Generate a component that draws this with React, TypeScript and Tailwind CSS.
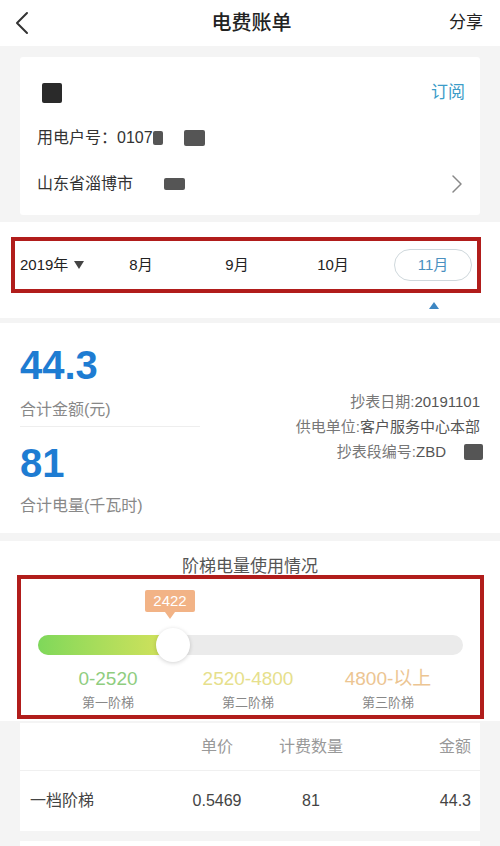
import React from "react";

const font = { fontFamily: '"Liberation Sans", "Noto Sans CJK SC", sans-serif' };

function Blob({ className }: { className: string }) {
  return <span className={"inline-block rounded-[2px] bg-[#555] blur-[0.6px] " + className} />;
}

export default function App() {
  const months = ["8月", "9月", "10月"];

  const tiers = [
    { range: "0-2520", label: "第一阶梯", color: "text-[#8fcd7f]" },
    { range: "2520-4800", label: "第二阶梯", color: "text-[#e6e08c]" },
    { range: "4800-以上", label: "第三阶梯", color: "text-[#ecc592]" },
  ];

  return (
    <div style={font} className="w-[500px] h-[846px] overflow-hidden bg-[#f4f4f4] text-[#333]">
      {/* 顶部导航 */}
      <div className="h-[46px] bg-white flex items-center justify-between px-[14px]">
        <svg width="16" height="24" viewBox="0 0 16 24" className="text-[#333]">
          <path d="M13 2 L3 12 L13 22" fill="none" stroke="currentColor" strokeWidth="2" strokeLinecap="round" strokeLinejoin="round" />
        </svg>
        <h1 className="text-[20px] font-medium text-[#222] ml-[24px]">电费账单</h1>
        <span className="text-[17px] text-[#222] mr-[3px]">分享</span>
      </div>

      {/* 用户信息 */}
      <div className="mt-[11px] mx-5 h-[158px] bg-white rounded-[3px] pl-[17px] pr-[15px] pt-[26px]">
        <div className="flex items-center justify-between h-[20px]">
          <span className="ml-[5px] inline-block w-[20px] h-[20px] bg-[#2a2a2a] rounded-[2px] blur-[0.7px]" />
          <span className="text-[17px] text-[#3c9cc8]">订阅</span>
        </div>
        <div className="mt-[25px] flex items-center h-[20px] text-[16px]">
          <span>用电户号：0107</span>
          <Blob className="w-[10px] h-[14px] ml-[0px]" />
          <Blob className="w-[21px] h-[16px] ml-[21px]" />
        </div>
        <div className="mt-[26px] flex items-center h-[20px] text-[16px]">
          <span>山东省淄博市</span>
          <Blob className="w-[21px] h-[12px] ml-[31px]" />
          <span className="ml-auto mr-[2px]">
            <svg width="12" height="20" viewBox="0 0 12 20">
              <path d="M2 2 L10 10 L2 18" fill="none" stroke="#888" strokeWidth="1.5" strokeLinecap="round" strokeLinejoin="round" />
            </svg>
          </span>
        </div>
      </div>

      {/* 月份选择 */}
      <div className="mt-[7px] h-[96px] bg-white pt-[15px]">
        <div className="mx-[11px] w-[470px] h-[56px] border-4 border-[#b11d1b] flex items-center text-[15px] text-[#222]">
          <div className="flex items-center pl-[5px] w-[78px]">
            <span>2019年</span>
            <svg width="10" height="8" viewBox="0 0 10 8" className="ml-[6px]">
              <path d="M0 0 H10 L5 8 Z" fill="#444" />
            </svg>
          </div>
          {months.map((m, i) => (
            <div key={i} className="w-[96px] text-center">{m}</div>
          ))}
          <div className="ml-[13px] w-[78px] h-[32px] rounded-full border border-[#cfd8dc] flex items-center justify-center text-[#4a90c0]">
            11月
          </div>
        </div>
        <div className="flex justify-end pr-[61px] mt-[9px]">
          <svg width="10" height="7" viewBox="0 0 10 7">
            <path d="M5 0 L10 7 H0 Z" fill="#3d86c2" />
          </svg>
        </div>
      </div>

      {/* 金额、电量 */}
      <div className="mt-[5px] h-[210px] bg-white flex px-5">
        <div className="w-[180px]">
          <div className="pt-[20px] text-[40px] leading-[44px] font-bold text-[#1e7cd2]">44.3</div>
          <div className="mt-[11px] text-[16px] leading-[24px] text-[#888]">合计金额(元)</div>
          <div className="mt-[4px] h-px bg-[#eee]" />
          <div className="pt-[14px] text-[40px] leading-[44px] font-bold text-[#1e7cd2]">81</div>
          <div className="mt-[9px] text-[16px] leading-[24px] text-[#888]">合计电量(千瓦时)</div>
        </div>
        <div className="flex-1 flex flex-col items-end pt-[66px] text-[15px] leading-[25px] text-[#777]">
          <div>抄表日期:<span className="text-[#555]">20191101</span></div>
          <div>供电单位:<span className="text-[#555]">客户服务中心本部</span></div>
          <div className="flex items-center">
            抄表段编号:<span className="text-[#555]">ZBD</span>
            <Blob className="w-[19px] h-[16px] ml-[18px] -mr-[3px]" />
          </div>
        </div>
      </div>

      {/* 阶梯电量 */}
      <div className="mt-[8px] h-[180px] bg-white pt-[14px]">
        <div className="text-center text-[17px] leading-[24px] text-[#555]">阶梯电量使用情况</div>
        <div className="mx-[17px] w-[467px] h-[144px] -mt-[4px] border-4 border-[#b11d1b] relative">
          <div className="absolute left-[124px] top-[11px] flex flex-col items-center">
            <div className="w-[50px] h-[22px] rounded-[2px] bg-[#f2b386] text-white text-[15px] leading-[22px] text-center">2422</div>
            <div className="w-0 h-0 border-x-[5px] border-x-transparent border-t-[7px] border-t-[#f2b386]" />
          </div>
          <div className="absolute left-[17px] top-[56px] w-[425px] h-[20px] rounded-full bg-[#ebebeb]">
            <div className="h-full w-[136px] rounded-l-full bg-gradient-to-r from-[#7ed85a] to-[#d6e25c]" />
          </div>
          <div className="absolute left-[135px] top-[49px] w-[34px] h-[34px] rounded-full bg-white shadow-[0_1px_4px_rgba(0,0,0,0.18)]" />
          <div className="absolute left-[17px] top-[88px] w-[420px] grid grid-cols-3 text-center">
            {tiers.map((t, i) => (
              <div key={i}>
                <div className={"text-[19px] leading-[24px] " + t.color}>{t.range}</div>
                <div className="mt-[2px] text-[13px] leading-[20px] text-[#888]">{t.label}</div>
              </div>
            ))}
          </div>
        </div>
      </div>

      {/* 明细表 */}
      <div className="mt-[2px] mx-5 h-[108px] bg-white text-[16px]">
        <div className="h-[48px] grid grid-cols-[157px_60px_128px_1fr] items-center pl-[10px] pr-[9px] text-[#999] border-b border-[#f0f0f0]">
          <span />
          <span className="text-center">单价</span>
          <span className="text-center">计费数量</span>
          <span className="text-right">金额</span>
        </div>
        <div className="h-[60px] grid grid-cols-[157px_60px_128px_1fr] items-center pl-[10px] pr-[9px] text-[#444]">
          <span>一档阶梯</span>
          <span className="text-center">0.5469</span>
          <span className="text-center">81</span>
          <span className="text-right">44.3</span>
        </div>
      </div>

      <div className="mt-[10px] mx-5 h-[40px] bg-white" />
    </div>
  );
}
